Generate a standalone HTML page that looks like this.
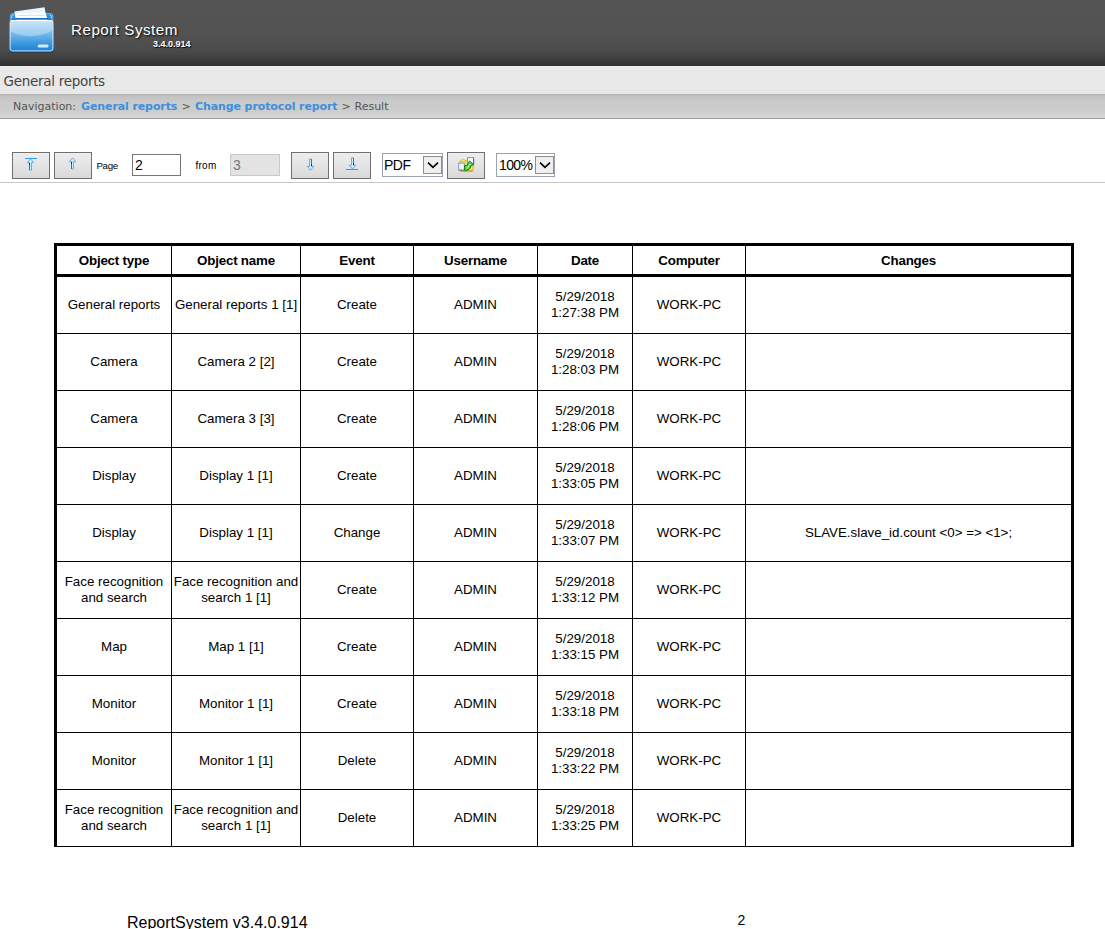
<!DOCTYPE html>
<html lang="en">
<head>
<meta charset="utf-8">
<title>Report System</title>
<style>
html,body{margin:0;padding:0;overflow:hidden;}
body{width:1105px;height:929px;position:relative;overflow:hidden;background:#fff;font-family:"Liberation Sans",Arial,sans-serif;color:#000;}
.abs{position:absolute;}
#hdr{left:0;top:0;width:1105px;height:66px;background:linear-gradient(#555 0%,#525252 50%,#4e4e4e 72%,#454545 83%,#383838 93%,#2e2e2e 100%);}
#apptitle{left:71px;top:20px;font-size:15.2px;line-height:20px;color:#fff;white-space:nowrap;text-shadow:1px 1px 2px #000;letter-spacing:0.5px;}
#appver{left:153px;top:39px;font-size:9px;line-height:11px;font-weight:bold;color:#fff;white-space:nowrap;text-shadow:1px 1px 1px #000;}
#titlebar{left:0;top:66px;width:1105px;height:28px;background:linear-gradient(#f1f1f1 0,#e9e9e9 2px,#e8e8e8 100%);}
#titlebar span{position:absolute;left:3.6px;top:7px;font-family:"DejaVu Sans","Liberation Sans",sans-serif;font-size:13.5px;letter-spacing:-0.3px;line-height:16px;color:#444;white-space:nowrap;}
#nav{left:0;top:94px;width:1105px;height:25px;background:linear-gradient(#b0b0b0 0,#c2c2c2 2px,#cacaca 8px,#cdcdcd 18px,#d6d6d6 23px);border-bottom:1px solid #9a9a9a;box-sizing:border-box;}
#nav div{position:absolute;left:13px;top:6px;width:500px;height:13px;font-family:"DejaVu Sans","Liberation Sans",sans-serif;font-size:11px;line-height:13px;color:#555;white-space:nowrap;}
#nav a{color:#3d8fdb;font-weight:bold;text-decoration:none;letter-spacing:-0.1px;}
#nav span,#nav a{position:absolute;top:0;}
.btn{top:152px;width:38px;height:27px;box-sizing:border-box;border:1px solid #707070;background:linear-gradient(#ededed 0%,#e4e4e4 50%,#d9d9d9 100%);}
.btn svg{position:absolute;left:0;top:0;}
.lbl{font-size:10px;line-height:12px;white-space:nowrap;color:#000;}
.inp{top:154px;height:22px;box-sizing:border-box;border:1px solid #767676;background:#fff;font-size:14px;line-height:20px;padding-left:2px;}
.sel{top:153px;height:24px;box-sizing:border-box;border:1px solid #9aa1b0;background:#fff;font-size:14px;line-height:23px;letter-spacing:-0.5px;white-space:nowrap;}
.sel .dd{position:absolute;top:2px;right:0;width:19px;height:18px;box-sizing:border-box;border:1px solid #8e8e92;background:#efefef;}
#hr{left:0;top:182px;width:1105px;height:1px;background:#c6c6c6;}
table{position:absolute;left:54px;top:243px;border-collapse:separate;border-spacing:0;table-layout:fixed;width:1020px;font-size:13.33px;line-height:16px;border-left:3px solid #000;border-right:3px solid #000;border-top:3px solid #000;}
td,th{padding:0;text-align:center;vertical-align:middle;border-bottom:1px solid #000;border-right:1px solid #000;overflow:hidden;}
td:last-child,th:last-child{border-right:0;}
th{height:26px;padding-top:2px;border-bottom:3px solid #000;font-weight:bold;letter-spacing:-0.2px;}
td{height:56px;}
#foot1{left:127px;top:914px;font-size:16px;line-height:18px;white-space:nowrap;}
#foot2{left:737.4px;top:912px;font-size:14px;line-height:16px;white-space:nowrap;}
</style>
</head>
<body>
<div id="hdr" class="abs"></div>
<svg class="abs" style="left:0;top:0" width="70" height="66" viewBox="0 0 70 66">
  <defs>
    <linearGradient id="fg" x1="0" y1="0" x2="0" y2="1"><stop offset="0" stop-color="#b5d9f6"/><stop offset="0.4" stop-color="#7bbcec"/><stop offset="0.75" stop-color="#3a97de"/><stop offset="1" stop-color="#1780d6"/></linearGradient>
    <linearGradient id="fb" x1="0" y1="0" x2="0" y2="1"><stop offset="0" stop-color="#3d9be6"/><stop offset="1" stop-color="#1a6fc2"/></linearGradient>
  </defs>
  <rect x="9.5" y="21" width="44.5" height="32" rx="3.5" fill="#222" opacity="0.45"/>
  <rect x="10.3" y="13.6" width="42.6" height="10" rx="2.6" fill="url(#fb)" stroke="#69b6f2" stroke-width="0.9"/>
  <path d="M11.8,18.5 V16.4 Q11.8,15.2 13.2,15.2" fill="none" stroke="#d6ecfc" stroke-width="0.8"/>
  <path d="M51.4,18.5 V16.4 Q51.4,15.2 50,15.2" fill="none" stroke="#d6ecfc" stroke-width="0.8"/>
  <polygon points="14.3,11.4 44.6,7.2 45.6,13.5 47.2,19.5 15.6,19.5" fill="#eaf4fc"/>
  <polygon points="16.6,13.2 45.4,12.6 47.2,19.5 16.6,19.5" fill="#fff"/>
  <path d="M18.2,15.4 H44.2" stroke="#d2dfea" stroke-width="0.9" fill="none"/>
  <path d="M15.2,18.6 H48.2" stroke="#1a6cbd" stroke-width="1.2" fill="none"/>
  <rect x="9.4" y="19.9" width="44.3" height="31.8" rx="3.2" fill="url(#fg)" stroke="#1b72c4" stroke-width="0.7"/>
  <rect x="10.2" y="20.7" width="42.7" height="30.2" rx="2.6" fill="none" stroke="#dff1fe" stroke-width="0.9" opacity="0.9"/>
  <path d="M10.6,20.6 H52.5" stroke="#fff" stroke-width="1.1" fill="none"/>
  <path d="M10.8,21.4 H52.3 V30.6 Q32,41.5 10.8,31.4 Z" fill="#fff" opacity="0.3"/>
  <rect x="37.6" y="44.4" width="11" height="3.2" rx="1.6" fill="#d3ebfc"/>
</svg>
<div id="apptitle" class="abs">Report System</div>
<div id="appver" class="abs">3.4.0.914</div>
<div id="titlebar" class="abs"><span>General reports</span></div>
<div id="nav" class="abs"><div><span style="left:0">Navigation:</span> <a style="left:68px">General reports</a> <span style="left:168.5px">&gt;</span> <a style="left:182px">Change protocol report</a> <span style="left:328.5px">&gt;</span> <span style="left:341.5px">Result</span></div></div>

<div class="abs btn" style="left:12px"></div>
<div class="abs btn" style="left:54px"></div>
<div class="abs lbl" style="left:96.5px;top:160px;font-size:9.7px;letter-spacing:-0.35px">Page</div>
<div class="abs inp" style="left:132px;width:49px">2</div>
<div class="abs lbl" style="left:195.4px;top:160px;letter-spacing:0.3px">from</div>
<div class="abs inp" style="left:230px;width:50px;background:#e3e3e3;border-color:#c9c9c9;color:#777">3</div>
<div class="abs btn" style="left:291px"></div>
<div class="abs btn" style="left:333px"></div>
<div class="abs sel" style="left:382px;width:61px"><span style="margin-left:1px">PDF</span><div class="dd"></div></div>
<div class="abs btn" style="left:447px"></div>
<div class="abs sel" style="left:496px;width:59px"><span style="margin-left:2px;letter-spacing:-0.6px">100%</span><div class="dd"></div></div>
<div id="hr" class="abs"></div>
<svg class="abs" style="left:0;top:148px" width="600" height="36" viewBox="0 148 600 36">
  <g fill="#c9f0ff" stroke="#4c9cf0" stroke-width="0.8" stroke-linejoin="miter">
    <path d="M30.5,158.8 L33.7,162.60000000000002 H31.5 V170.20000000000002 H29.5 V162.60000000000002 H27.3 Z"/>
    <path d="M72.5,157.8 L75.7,161.60000000000002 H73.5 V169.0 H71.5 V161.60000000000002 H69.3 Z"/>
    <path d="M310.5,170.2 L313.7,166.39999999999998 H311.5 V159.0 H309.5 V166.39999999999998 H307.3 Z"/>
    <path d="M352.5,169.0 L355.7,165.2 H353.5 V157.8 H351.5 V165.2 H349.3 Z"/>
  </g>
  <g stroke="#3f95ee" stroke-width="1" fill="none">
    <path d="M25,158.5 H37"/>
    <path d="M346,169.5 H358"/>
  </g>
  <g stroke="#2c6fd0" stroke-width="1" fill="none">
    <path d="M29.5,163 V170"/>
    <path d="M71.5,162 V169"/>
    <path d="M311.5,159 V166"/>
    <path d="M353.5,158 V165"/>
  </g>
  <g stroke="#0a1f55" stroke-width="1" fill="none">
    <path d="M29.5,163 V164.6"/>
    <path d="M71.5,162 V163.6"/>
    <path d="M311.5,164.4 V166"/>
    <path d="M353.5,163.4 V165"/>
  </g>
  <g fill="none" stroke="#000" stroke-width="1.6" stroke-linecap="butt" stroke-linejoin="miter">
    <path d="M428,162.6 L433,167.4 L438,162.6"/>
    <path d="M540,162.6 L545,167.4 L550,162.6"/>
  </g>
  <!-- export icon -->
  <g>
    <rect x="460" y="160.6" width="13.2" height="10.8" rx="1.2" fill="#f4d767" stroke="#d9ae2c" stroke-width="0.9"/>
    <path d="M460.6,170.9 H472.6" stroke="#c79a1c" stroke-width="1" fill="none"/>
    <rect x="461" y="159.6" width="4.2" height="1.8" rx="0.8" fill="#fbeeae" stroke="#d8b033" stroke-width="0.7"/>
    <rect x="467.6" y="157.6" width="6" height="7" fill="#f2faff" stroke="#8593c4" stroke-width="1"/>
    <path d="M473.6,158.5 V164.5" stroke="#4f5f9c" stroke-width="1" fill="none"/>
    <rect x="458.6" y="163.2" width="5.8" height="6.8" fill="#e4f6fd" stroke="#8d9bc8" stroke-width="1"/>
    <path d="M459,170.3 H464.5" stroke="#9a7a3a" stroke-width="0.9" fill="none"/>
    <path d="M464.6,170.2 L464.6,165.6 L467,165.4 L469.6,161 L473.4,164.6 L471.2,165.4 L469.4,169 L466.8,170.4 Z" fill="#55d455" stroke="#0c7d10" stroke-width="1" stroke-linejoin="round"/>
    <path d="M467.2,168.4 L470.2,163.6" stroke="#9cf09c" stroke-width="1.1" fill="none"/>
  </g>
</svg>

<table>
<colgroup><col style="width:115px"><col style="width:129px"><col style="width:113px"><col style="width:124px"><col style="width:95px"><col style="width:113px"><col style="width:325px"></colgroup>
<tr><th>Object type</th><th>Object name</th><th>Event</th><th>Username</th><th>Date</th><th>Computer</th><th>Changes</th></tr>
<tr><td>General reports</td><td>General reports 1 [1]</td><td>Create</td><td>ADMIN</td><td>5/29/2018<br>1:27:38 PM</td><td>WORK-PC</td><td></td></tr>
<tr><td>Camera</td><td>Camera 2 [2]</td><td>Create</td><td>ADMIN</td><td>5/29/2018<br>1:28:03 PM</td><td>WORK-PC</td><td></td></tr>
<tr><td>Camera</td><td>Camera 3 [3]</td><td>Create</td><td>ADMIN</td><td>5/29/2018<br>1:28:06 PM</td><td>WORK-PC</td><td></td></tr>
<tr><td>Display</td><td>Display 1 [1]</td><td>Create</td><td>ADMIN</td><td>5/29/2018<br>1:33:05 PM</td><td>WORK-PC</td><td></td></tr>
<tr><td>Display</td><td>Display 1 [1]</td><td>Change</td><td>ADMIN</td><td>5/29/2018<br>1:33:07 PM</td><td>WORK-PC</td><td>SLAVE.slave_id.count &lt;0&gt; =&gt; &lt;1&gt;;</td></tr>
<tr><td>Face recognition<br>and search</td><td>Face recognition and<br>search 1 [1]</td><td>Create</td><td>ADMIN</td><td>5/29/2018<br>1:33:12 PM</td><td>WORK-PC</td><td></td></tr>
<tr><td>Map</td><td>Map 1 [1]</td><td>Create</td><td>ADMIN</td><td>5/29/2018<br>1:33:15 PM</td><td>WORK-PC</td><td></td></tr>
<tr><td>Monitor</td><td>Monitor 1 [1]</td><td>Create</td><td>ADMIN</td><td>5/29/2018<br>1:33:18 PM</td><td>WORK-PC</td><td></td></tr>
<tr><td>Monitor</td><td>Monitor 1 [1]</td><td>Delete</td><td>ADMIN</td><td>5/29/2018<br>1:33:22 PM</td><td>WORK-PC</td><td></td></tr>
<tr><td>Face recognition<br>and search</td><td>Face recognition and<br>search 1 [1]</td><td>Delete</td><td>ADMIN</td><td>5/29/2018<br>1:33:25 PM</td><td>WORK-PC</td><td></td></tr>
</table>
<div id="foot1" class="abs">ReportSystem v3.4.0.914</div>
<div id="foot2" class="abs">2</div>
</body>
</html>
